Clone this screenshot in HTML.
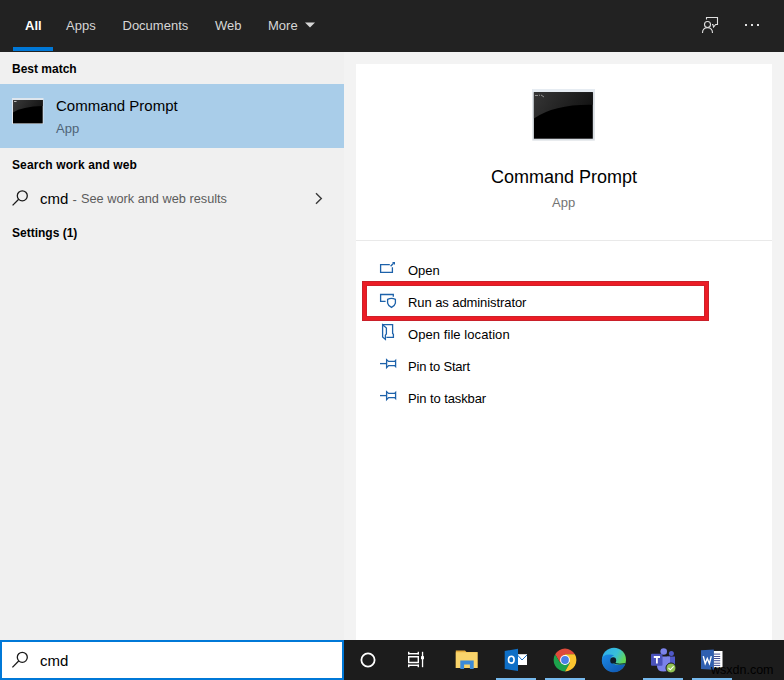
<!DOCTYPE html>
<html><head><meta charset="utf-8">
<style>
html,body{margin:0;padding:0;}
body{width:784px;height:680px;position:relative;overflow:hidden;background:#f3f3f3;font-family:"Liberation Sans",sans-serif;}
.a{position:absolute;white-space:nowrap;}
.t{position:absolute;white-space:nowrap;line-height:1;}
#top{left:0;top:0;width:784px;height:52px;background:#222222;}
#left{left:0;top:52px;width:344px;height:588px;background:#f0f0f0;}
#sel{left:0;top:84px;width:344px;height:64px;background:#a9cde9;}
#card{left:356px;top:64px;width:416px;height:576px;background:#fff;}
#sep{left:356px;top:240px;width:416px;height:1px;background:#e9e9e9;}
#task{left:0;top:640px;width:784px;height:40px;background:#1c1c1c;}
#sbox{left:0;top:640px;width:340px;height:36px;background:#fff;border:2px solid #0078d7;}
.tab{font-size:13px;color:#d6d6d6;top:19px;}
.hdr{font-size:12px;font-weight:bold;color:#000;}
.act{font-size:13px;color:#000;left:408px;}
.ul{position:absolute;top:678px;height:2px;width:40px;background:#76b9ed;}
</style></head>
<body>
<div class="a" id="top"></div>
<div class="t tab" style="left:25px;color:#fff;font-weight:bold;">All</div>
<div class="a" style="left:13px;top:47px;width:40px;height:4px;background:#0078d7;"></div>
<div class="t tab" style="left:66px;">Apps</div>
<div class="t tab" style="left:122.5px;">Documents</div>
<div class="t tab" style="left:215px;">Web</div>
<div class="t tab" style="left:268px;">More</div>
<svg class="a" style="left:304px;top:21px" width="12" height="8"><path d="M1 1.5 H11 L6 6.5 Z" fill="#d6d6d6"/></svg>

<div class="a" id="left"></div>
<div class="a" id="sel"></div>
<div class="a" id="card"></div>
<div class="a" id="sep"></div>
<div class="a" id="task"></div>
<div class="a" id="sbox"></div>

<div class="t hdr" style="left:12px;top:63px;">Best match</div>
<div class="t" style="left:56px;top:98px;font-size:15px;color:#000;">Command Prompt</div>
<div class="t" style="left:56px;top:122px;font-size:13px;color:#4f6377;">App</div>
<div class="t hdr" style="left:12px;top:159px;letter-spacing:0.12px;">Search work and web</div>
<div class="t" style="left:40px;top:191px;font-size:15px;color:#000;">cmd</div>
<div class="t" style="left:72.5px;top:193px;font-size:13px;color:#5c5c5c;">-</div><div class="t" style="left:81px;top:193px;font-size:12.75px;color:#5c5c5c;">See work and web results</div>
<div class="t hdr" style="left:12px;top:227px;">Settings (1)</div>

<div class="t" style="left:491px;top:168px;font-size:18px;color:#000;">Command Prompt</div>
<div class="t" style="left:552px;top:196px;font-size:13px;color:#737373;">App</div>

<div class="t act" style="top:263.5px;">Open</div>
<div class="t act" style="top:295.5px;letter-spacing:-0.08px;">Run as administrator</div>
<div class="t act" style="top:327.5px;letter-spacing:0.07px;">Open file location</div>
<div class="t act" style="top:359.5px;letter-spacing:-0.2px;">Pin to Start</div>
<div class="t act" style="top:391.5px;letter-spacing:-0.1px;">Pin to taskbar</div>

<div class="a" style="left:363px;top:282px;width:339px;height:32px;border:3px solid #ec1c25;box-shadow:0 0 0 1px #c9202a, inset 0 0 0 1px #cf1f29;"></div>


<!-- left cmd icon -->
<svg class="a" style="left:12px;top:98px" width="32" height="26" viewBox="12 98 32 26">
<rect x="12" y="98" width="31.5" height="26" fill="#dfe6ed"/>
<rect x="13" y="100" width="29.7" height="23.4" fill="#000"/>
<defs><linearGradient id="g1" x1="0" y1="0" x2="1" y2="0.3"><stop offset="0" stop-color="#3a3a3a"/><stop offset="1" stop-color="#161616"/></linearGradient></defs><path d="M13 100 H42.7 V106 Q22 106.5 13 112.5 Z" fill="url(#g1)"/>
<rect x="14" y="101" width="2.5" height="1" fill="#bbb"/>
</svg>
<!-- right cmd icon -->
<svg class="a" style="left:532px;top:89px" width="63" height="52" viewBox="532 89 63 52">
<rect x="532.3" y="88.8" width="62.5" height="51.8" fill="#d9dee3"/>
<rect x="532.3" y="88.8" width="62.5" height="3.4" fill="#e6ecf2"/>
<rect x="533.9" y="92.2" width="58.9" height="46.5" fill="#000"/>
<defs><linearGradient id="g2" x1="0" y1="0" x2="1" y2="0.3"><stop offset="0" stop-color="#363636"/><stop offset="1" stop-color="#141414"/></linearGradient></defs><path d="M533.9 92.2 H592.8 V104.8 Q555 104 533.9 118.5 Z" fill="url(#g2)"/>
<path d="M535 95.5 h3 M539 95 l1 .5 M541 95 l3 2" stroke="#aaa" stroke-width="0.8" fill="none"/>
</svg>
<!-- search icon left -->
<svg class="a" style="left:0;top:180px" width="40" height="30" viewBox="0 180 40 30">
<circle cx="22.3" cy="195.8" r="5" stroke="#1a1a1a" stroke-width="1.3" fill="none"/>
<path d="M12.6 205.4 L18.7 199.3" stroke="#1a1a1a" stroke-width="1.3"/>
</svg>
<!-- chevron -->
<svg class="a" style="left:310px;top:188px" width="20" height="20" viewBox="310 188 20 20">
<path d="M316 193.2 L321.3 198.5 L316 203.8" stroke="#3a3a3a" stroke-width="1.4" fill="none"/>
</svg>
<!-- search icon box -->
<svg class="a" style="left:0;top:645px" width="40" height="30" viewBox="0 645 40 30">
<circle cx="22.3" cy="657.3" r="5" stroke="#1a1a1a" stroke-width="1.3" fill="none"/>
<path d="M12.4 667.4 L18.7 661" stroke="#1a1a1a" stroke-width="1.3"/>
</svg>
<!-- action icons -->
<svg class="a" style="left:372px;top:255px" width="30" height="160" viewBox="372 255 30 160" fill="none" stroke="#1d62aa" stroke-width="1.3">
<path d="M389.8 264.6 H380.6 V272.3 H392.4 V267.2"/>
<path d="M390.6 266.2 L393.6 263.2"/>
<path d="M392 262 H395 V265 Z" fill="#1e64ad" stroke="none"/>
<path d="M385.6 301.3 H380.6 V294.5 H393.3 V296.8"/>
<path d="M387.6 299.4 Q391.5 297.3 395.4 299.4 V303.2 Q395 305.6 391.5 307.4 Q388 305.6 387.6 303.2 Z"/>
<path d="M382.6 324.6 H392.6 V333.4 L393.4 334.2 V337.4 H386.4"/>
<path d="M382.6 324.6 V337 L385.4 339.4 V335.2 L386.4 334 V328 Z"/>
<path d="M380 363.6 H386.5"/>
<path d="M386.6 359.6 V367.6 L388.6 365.6 H394.6 L395.6 366.6 V360.4 L394.6 361.4 H388.6 Z"/>
<path d="M380 395.6 H386.5"/>
<path d="M386.6 391.6 V399.6 L388.6 397.6 H394.6 L395.6 398.6 V392.4 L394.6 393.4 H388.6 Z"/>
</svg>
<!-- feedback icon -->
<svg class="a" style="left:698px;top:12px" width="26" height="26" viewBox="698 12 26 26" fill="none" stroke="#e0e0e0" stroke-width="1.1">
<path d="M706.5 19.6 V17.5 H717.5 V24.5 H715.6 L713.6 27 L712.9 24.5 H712"/>
<circle cx="707.5" cy="24.5" r="3"/>
<path d="M702.5 33 Q702.5 27.8 707.5 27.8 Q712.5 27.8 712.5 33"/>
</svg>
<!-- dots -->
<div class="a" style="left:745px;top:24px;width:2px;height:2px;background:#e0e0e0"></div>
<div class="a" style="left:751px;top:24px;width:2px;height:2px;background:#e0e0e0"></div>
<div class="a" style="left:757px;top:24px;width:2px;height:2px;background:#e0e0e0"></div>
<!-- taskbar -->
<svg class="a" style="left:344px;top:640px" width="440" height="40" viewBox="344 640 440 40">
<circle cx="368" cy="660" r="6.6" stroke="#fff" stroke-width="1.8" fill="none"/>
<g fill="#fff">
<rect x="408" y="651.8" width="1.4" height="2.6"/><rect x="417.6" y="651.8" width="1.4" height="2.6"/><rect x="408" y="653" width="11" height="1.4"/>
<path d="M408 656 H419 V663.2 H408 Z M409.4 657.4 V661.8 H417.6 V657.4 Z" fill-rule="evenodd"/>
<rect x="408" y="664.6" width="1.4" height="2.6"/><rect x="417.6" y="664.6" width="1.4" height="2.6"/><rect x="408" y="664.6" width="11" height="1.4"/>
<rect x="421.9" y="651.8" width="1.3" height="15.4"/>
<rect x="421" y="656.2" width="3" height="3"/>
</g>
<!-- explorer -->
<path d="M455.8 650.5 H465 L466.5 652 H477.5 V668 H455.8 Z" fill="#e5ad3c"/>
<path d="M455.8 652.2 H477.5 V668 H455.8 Z" fill="#f9d46b"/>
<path d="M460.3 669 V660.4 H473.7 V669 H469.9 V664.5 H464.1 V669 Z" fill="#3b8ad8"/>
<!-- outlook -->
<rect x="517" y="654.2" width="10" height="10.8" fill="#fff"/>
<path d="M517.5 655 L522 660 L527 655" stroke="#1a6fc4" stroke-width="1" fill="none"/>
<path d="M504.7 651 L518 648.8 V671 L504.7 669 Z" fill="#0f6fc6"/>
<ellipse cx="511.3" cy="659.7" rx="2.8" ry="3.4" stroke="#fff" stroke-width="1.6" fill="none"/>
<!-- chrome -->
<path d="M565 660 L565 654.3 L574.87 654.3 A11.4 11.4 0 0 0 555.13 654.3 L560.06 662.85 Z" fill="#de4b3b"/>
<path d="M565 660 L560.06 662.85 L555.13 654.3 A11.4 11.4 0 0 0 565 671.4 L569.94 662.85 Z" fill="#1da24c"/>
<path d="M565 660 L569.94 662.85 L565 671.4 A11.4 11.4 0 0 0 574.87 654.3 L565 654.3 Z" fill="#fbc52f"/>
<circle cx="565" cy="660" r="4.9" fill="#fff"/>
<circle cx="565" cy="660" r="3.9" fill="#4a80e8"/>
<!-- edge -->
<defs>
<linearGradient id="eg1" x1="0" y1="0" x2="1" y2="0.6"><stop offset="0.15" stop-color="#31b0e6"/><stop offset="0.55" stop-color="#38c0d8"/><stop offset="0.9" stop-color="#62d755"/></linearGradient>
<linearGradient id="eg2" x1="0" y1="0" x2="1" y2="1"><stop offset="0" stop-color="#1b8ae6"/><stop offset="1" stop-color="#0f52ac"/></linearGradient>
</defs>
<g transform="translate(614 659.8)">
<circle r="12" fill="url(#eg1)"/>
<path d="M-12 -1.5 A12 12 0 0 0 11.3 4 Q6 5.6 1.5 4.6 Q-3.8 3.2 -3.8 0 Q-3.4 -3.5 0.2 -4.6 Q-4 -6 -8 -5 Q-11 -4 -12 -1.5 Z" fill="url(#eg2)"/>
<ellipse cx="-0.8" cy="0.6" rx="3" ry="3.2" fill="#0d1b28"/>
<path d="M0.5 3.6 Q5.5 5 11.5 3.8" stroke="#0d2a36" stroke-width="1" fill="none"/>
</g>
<!-- teams -->
<circle cx="663.7" cy="651.5" r="3.3" fill="#7b83eb"/>
<circle cx="671.4" cy="653.4" r="2.5" fill="#5059c9"/>
<path d="M667 656.5 H675 V665 Q675 669 671 669 Q667 669 667 665 Z" fill="#5059c9"/>
<path d="M657 656.5 H670 V666 Q670 671.5 663.5 671.5 Q657 671.5 657 666 Z" fill="#7b83eb"/>
<rect x="651" y="653.8" width="11.5" height="12" rx="1" fill="#4b53bc"/>
<path d="M653.8 657 H660 M656.9 657 V663.6" stroke="#fff" stroke-width="1.8"/>
<circle cx="671" cy="668" r="5" fill="#92c353" stroke="#1c1c1c" stroke-width="1"/>
<path d="M668.5 668 L670.3 669.8 L673.6 666.4" stroke="#fff" stroke-width="1.1" fill="none"/>
<!-- word -->
<rect x="713.5" y="651" width="9" height="16.5" fill="#fff"/>
<path d="M714 654.1 H720.2 M714 656.5 H720.2 M714 658.5 H720.2 M714 660.7 H720.2 M714 663.2 H720.2 M714 665.4 H720.2" stroke="#2c3a86" stroke-width="0.9"/>
<path d="M701 650.3 L713.8 649.4 V669.8 L701 669 Z" fill="#2f5fb0"/>
<path d="M703.3 656.2 L705.2 663.6 L707.3 658.6 L709.4 663.6 L711.3 656.2" stroke="#fff" stroke-width="1.4" fill="none"/>
</svg>
<div class="ul" style="left:496px"></div>
<div class="ul" style="left:545px"></div>
<div class="ul" style="left:643px"></div>
<div class="ul" style="left:692px"></div>
<div class="t" style="left:40px;top:653px;font-size:15px;color:#000;">cmd</div>
<div class="t" style="left:711px;top:663.5px;font-size:12.5px;color:#000;">wsxdn.com</div>
</body></html>
